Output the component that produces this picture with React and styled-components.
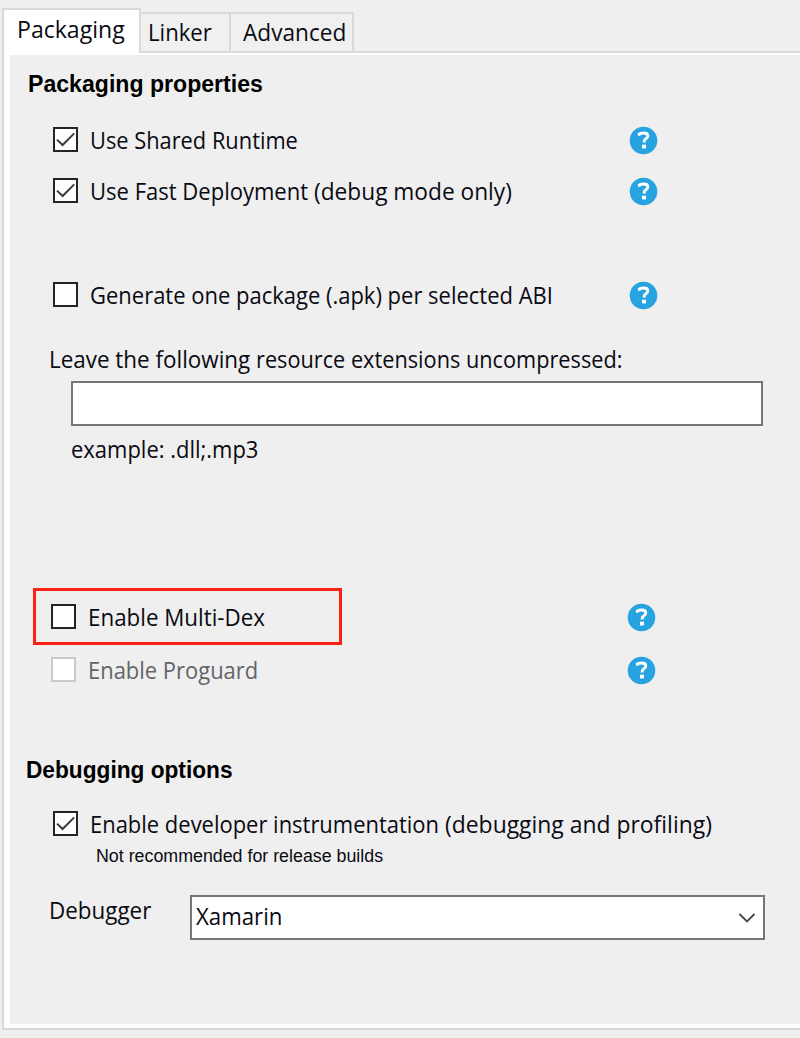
import React, { useLayoutEffect, useRef, useState } from "react";
import styled, { createGlobalStyle } from "styled-components";

const GlobalStyle = createGlobalStyle`
  * { box-sizing: border-box; }
  body { margin: 0; background: #efefef; }
`;

const Window = styled.div`
  width: 800px;
  height: 1038px;
  padding: 8px 0 8px 2px;
  background: #efefef;
  color: #0a0a12;
  font-family: "Open Sans", "Noto Sans", sans-serif;
  font-size: 23.5px;
  overflow: hidden;
  display: flex;
  flex-direction: column;
`;

const TabBar = styled.div`
  display: flex;
  align-items: flex-end;
  height: 45px;
  flex: none;
`;

const Tab = styled.div`
  width: ${(p) => p.$width}px;
  height: ${(p) => (p.$active ? 45 : 41)}px;
  padding: ${(p) => (p.$active ? "3px 0 0 13px" : `2px 0 0 ${p.$inset}px`)};
  border: 2px solid #d9d9d9;
  border-left-width: ${(p) => (p.$active ? 2 : 0)}px;
  border-bottom-width: ${(p) => (p.$active ? 0 : 2)}px;
  background: ${(p) => (p.$active ? "#fff" : "#f0f0f0")};
`;

const TabRule = styled.div`
  flex: 1;
  height: 2px;
  background: #d9d9d9;
`;

const Frame = styled.div`
  flex: none;
  height: 977px;
  padding: 2px 0 4px 6px;
  background: #fff;
  border-left: 2px solid #d9d9d9;
  border-bottom: 2px solid #d9d9d9;
`;

const Panel = styled.div`
  height: 969px;
  padding-top: 14px;
  background: #efefef;
`;

const Heading = styled.h2`
  margin: ${(p) => p.$top || 0}px 0 0 ${(p) => p.$left}px;
  height: 30px;
  font: bold 23px/30px "Liberation Sans", Arial, sans-serif;
  color: #000;
`;

const Row = styled.div`
  display: flex;
  align-items: center;
  width: ${(p) => p.$width || 605}px;
  height: 31px;
  margin: ${(p) => p.$top || 0}px 0 0 ${(p) => p.$left || 43}px;
  color: ${(p) => (p.$disabled ? "#646468" : "inherit")};
`;

const Box = styled.span`
  flex: none;
  display: flex;
  width: 25px;
  height: 25px;
  margin-right: 12px;
  background: #fff;
  border: 2px solid ${(p) => (p.$disabled ? "#cacaca" : "#242424")};
`;

const Caption = styled.div`
  display: flex;
  height: 31px;
  line-height: 33px;
  margin: ${(p) => p.$top}px 0 0 ${(p) => p.$left}px;
`;

const TextField = styled.div`
  width: 692px;
  height: 45px;
  margin: 7px 0 0 61px;
  background: #fff;
  border: 2px solid #767676;
`;

const Highlight = styled.div`
  display: flex;
  align-items: center;
  width: 309px;
  height: 57px;
  padding-left: 15px;
  border: 3px solid #fb2213;
`;

const HighlightRow = styled.div`
  display: flex;
  align-items: center;
  justify-content: space-between;
  width: 623px;
  margin: 124px 0 0 23px;
`;

const Note = styled.div`
  height: 20px;
  margin: 6px 0 0 86px;
  font: 17.5px/22px "Liberation Sans", Arial, sans-serif;
`;

const SelectRow = styled.div`
  display: flex;
  margin: 30px 0 0 39px;
  line-height: 31px;
`;

const SelectLabel = styled.div`
  width: 141px;
`;

const Select = styled.div`
  display: flex;
  justify-content: space-between;
  align-items: flex-start;
  width: 575px;
  height: 45px;
  padding: 0 7px 0 4px;
  background: #fff;
  border: 2px solid #767676;
  line-height: 38px;
`;

const Chevron = styled.svg`
  margin-top: 15px;
`;

const HelpSvg = styled.svg`
  flex: none;
  margin: 2px 0 0 auto;
`;

const FitBox = styled.span`
  display: inline-block;
  flex: none;
  width: ${(p) => p.$width}px;
  white-space: pre;
`;

const FitText = styled.span`
  display: inline-block;
  transform-origin: 0 0;
`;

/* Narrows a line of text horizontally so that it takes exactly the given width. */
function Fit({ width, children }) {
  const ref = useRef(null);
  const [scale, setScale] = useState(1);
  useLayoutEffect(() => {
    setScale(width / ref.current.offsetWidth);
  }, [width]);
  return (
    <FitBox $width={width}>
      <FitText ref={ref} style={{ transform: `scaleX(${scale})` }}>
        {children}
      </FitText>
    </FitBox>
  );
}

function Help() {
  return (
    <HelpSvg width="29" height="29" viewBox="0 0 29 29">
      <circle cx="14.5" cy="14.5" r="13.8" fill="#27a3e2" />
      <path
        d="M10.3 9.8V8Q12.2 7 14.8 7Q18.8 7 18.8 10Q18.8 11.8 16.7 12.9Q15.2 13.8 15.2 15.2V16.6"
        fill="none"
        stroke="#fff"
        strokeWidth="2.9"
      />
      <rect x="13" y="18.7" width="4" height="3.7" fill="#fff" />
    </HelpSvg>
  );
}

function CheckBox({ checked, disabled }) {
  return (
    <Box $disabled={disabled}>
      {checked && (
        <svg width="21" height="21" viewBox="0 0 21 21">
          <path d="M2 10.6L7.6 16L19.2 4.4" fill="none" stroke="#3c3c3c" strokeWidth="2" />
        </svg>
      )}
    </Box>
  );
}

function Option({ children, checked, disabled, top, left, rowWidth, help = true }) {
  return (
    <Row $top={top} $left={left} $width={rowWidth} $disabled={disabled}>
      <CheckBox checked={checked} disabled={disabled} />
      {children}
      {help && <Help />}
    </Row>
  );
}

export default function App() {
  return (
    <>
      <GlobalStyle />
      <Window>
        <TabBar>
          <Tab $active $width={139}><Fit width={108}>Packaging</Fit></Tab>
          <Tab $width={90} $inset={7}><Fit width={64}>Linker</Fit></Tab>
          <Tab $width={123} $inset={12}><Fit width={103}>Advanced</Fit></Tab>
          <TabRule />
        </TabBar>
        <Frame>
          <Panel>
            <Heading $left={18}><Fit width={235}>Packaging properties</Fit></Heading>
            <Option top={25} checked>
              <Fit width={208}>Use Shared Runtime</Fit>
            </Option>
            <Option top={20} checked>
              <Fit width={224}>{"Use Fast Deployment "}</Fit>
              <Fit width={198}>(debug mode only)</Fit>
            </Option>
            <Option top={73}>
              <Fit width={463}>Generate one package (.apk) per selected ABI</Fit>
            </Option>
            <Caption $top={33} $left={39}>
              <Fit width={207}>{"Leave the following "}</Fit>
              <Fit width={366}>resource extensions uncompressed:</Fit>
            </Caption>
            <TextField />
            <Caption $top={7} $left={61}><Fit width={187}>example: .dll;.mp3</Fit></Caption>
            <HighlightRow>
              <Highlight>
                <CheckBox />
                <Fit width={177}>Enable Multi-Dex</Fit>
              </Highlight>
              <Help />
            </HighlightRow>
            <Option top={9} left={41} rowWidth={605} disabled>
              <Fit width={170}>Enable Proguard</Fit>
            </Option>
            <Heading $top={70} $left={16}><Fit width={207}>Debugging options</Fit></Heading>
            <Option top={23} checked help={false} rowWidth={700}>
              <Fit width={355}>{"Enable developer instrumentation "}</Fit>
              <Fit width={267}>(debugging and profiling)</Fit>
            </Option>
            <Note><Fit width={287}>Not recommended for release builds</Fit></Note>
            <SelectRow>
              <SelectLabel><Fit width={102}>Debugger</Fit></SelectLabel>
              <Select>
                <Fit width={86}>Xamarin</Fit>
                <Chevron width="18" height="12" viewBox="0 0 18 12">
                  <path d="M1.5 2L9 9.5L16.5 2" fill="none" stroke="#484848" strokeWidth="1.9" />
                </Chevron>
              </Select>
            </SelectRow>
          </Panel>
        </Frame>
      </Window>
    </>
  );
}
